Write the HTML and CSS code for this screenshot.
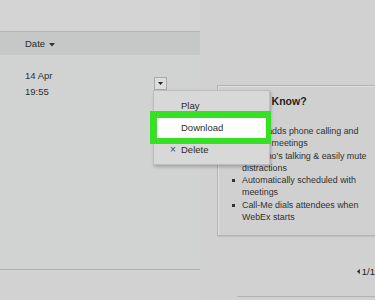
FILE: index.html
```html
<!DOCTYPE html>
<html>
<head>
<meta charset="utf-8">
<link rel="stylesheet" href="styles.css">
</head>
<body>
<div class="page">
  <div class="left">
    <div class="left-top"></div>
    <div class="head">Date <svg class="caret" width="6" height="4" viewBox="0 0 6 4"><polygon points="0,0 6,0 3,3.5" fill="#333"/></svg></div>
    <div class="rows">
      <div class="row">
        <div class="date">14 Apr<br>19:55</div>
        <div class="dd"><svg width="5" height="3" viewBox="0 0 5 3"><polygon points="0,0 5,0 2.5,3" fill="#222"/></svg></div>
      </div>
    </div>
  </div>
  <div class="right">
    <div class="panel">
      <h3 class="title">Did You Know?</h3>
      <ul class="tips">
        <li><span>Audio adds phone calling and<br>to your meetings</span></li>
        <li><span>See who's talking &amp; easily mute<br>distractions</span></li>
        <li><span>Automatically scheduled with<br>meetings</span></li>
        <li><span>Call-Me dials attendees when<br>WebEx starts</span></li>
      </ul>
    </div>
    <div class="pager"><svg width="5" height="9" viewBox="0 0 5 9"><polygon points="5,0 5,9 0,4.5" fill="#222"/></svg><span>1/1</span></div>
    <div class="right-foot"></div>
  </div>
  <div class="menu">
    <div class="item">Play</div>
    <div class="item hl">Download</div>
    <div class="item del"><span class="x">×</span>Delete</div>
  </div>
</div>
</body>
</html>
```
FILE: styles.css
```css
* { box-sizing: border-box; margin: 0; padding: 0; }
body { margin: 0; width: 375px; height: 300px; overflow: hidden; background: #d0d0d0; font-family: "Liberation Sans", Arial, sans-serif; color: #333; }
.page { position: relative; display: flex; width: 375px; height: 300px; overflow: hidden; background: #d2d2d2; }
.left { width: 200px; flex: none; display: flex; flex-direction: column; }
.left-top { height: 32px; background: #d4d4d4; border-bottom: 1px solid #b6b6b6; }
.head { height: 23px; background: #c6c8c8; padding-left: 25px; font-size: 9.5px; display: flex; align-items: center; gap: 4px; color: #2a2a2a; }
.caret { margin-top: 2px; }
.rows { height: 215px; background: #d1d3d3; border-bottom: 1px solid #b0b0b0; padding-top: 13px; }
.row { display: flex; align-items: flex-start; padding-left: 25px; }
.date { font-size: 9.5px; line-height: 16px; color: #2e2e2e; }
.dd { margin-left: auto; margin-right: 33px; margin-top: 9px; width: 13px; height: 13px; background: #dcdcdc; border: 1px solid #a9a9a9; display: flex; align-items: center; justify-content: center; }
.right { flex: 1; display: flex; flex-direction: column; background: #d1d1d1; min-width: 0; }
.panel { flex: none; margin: 85px 0 0 17px; width: 200px; height: 151px; border: 1px solid #b4b4b4; box-shadow: inset 1px 1px 0 #dedede, 1px 1px 1px rgba(0,0,0,0.08); background: #d0d0d0; padding: 8px 0 0 12px; }
.title { font-size: 10.5px; font-weight: bold; line-height: 14px; color: #222; }
.tips { list-style: none; margin-top: 17px; padding-left: 2px; }
.tips li { display: flex; align-items: flex-start; font-size: 8.9px; line-height: 12.3px; white-space: nowrap; color: #303030; }
.tips li::before { content: ""; flex: none; width: 3px; height: 3px; background: #333; margin: 5px 7px 0 0; }
.pager { flex: none; margin-top: 28px; height: 14px; padding-left: 157px; display: flex; align-items: center; gap: 2px; font-size: 9.5px; color: #222; }
.right-foot { flex: none; margin: 18px 0 0 37px; border-top: 1px solid #b2b2b2; }
.menu { position: absolute; left: 153px; top: 90px; width: 117px; height: 75px; background: #d8d8d8; border: 1px solid #bdbdbd; box-shadow: 1px 2px 3px rgba(0,0,0,0.22); padding-top: 4px; z-index: 2; }
.item { height: 22px; line-height: 22px; padding-left: 27px; font-size: 9.5px; color: #2c2c2c; }
.hl { position: relative; z-index: 0; }
.hl::before { content: ""; position: absolute; left: -4px; right: -2px; top: -6px; bottom: -5px; background: #fff; border-style: solid; border-color: #36e125; border-width: 7px 5px 6px 7px; z-index: -1; }
.del { display: flex; padding-left: 16px; }
.x { width: 11px; font-size: 10px; color: #444; }
```
